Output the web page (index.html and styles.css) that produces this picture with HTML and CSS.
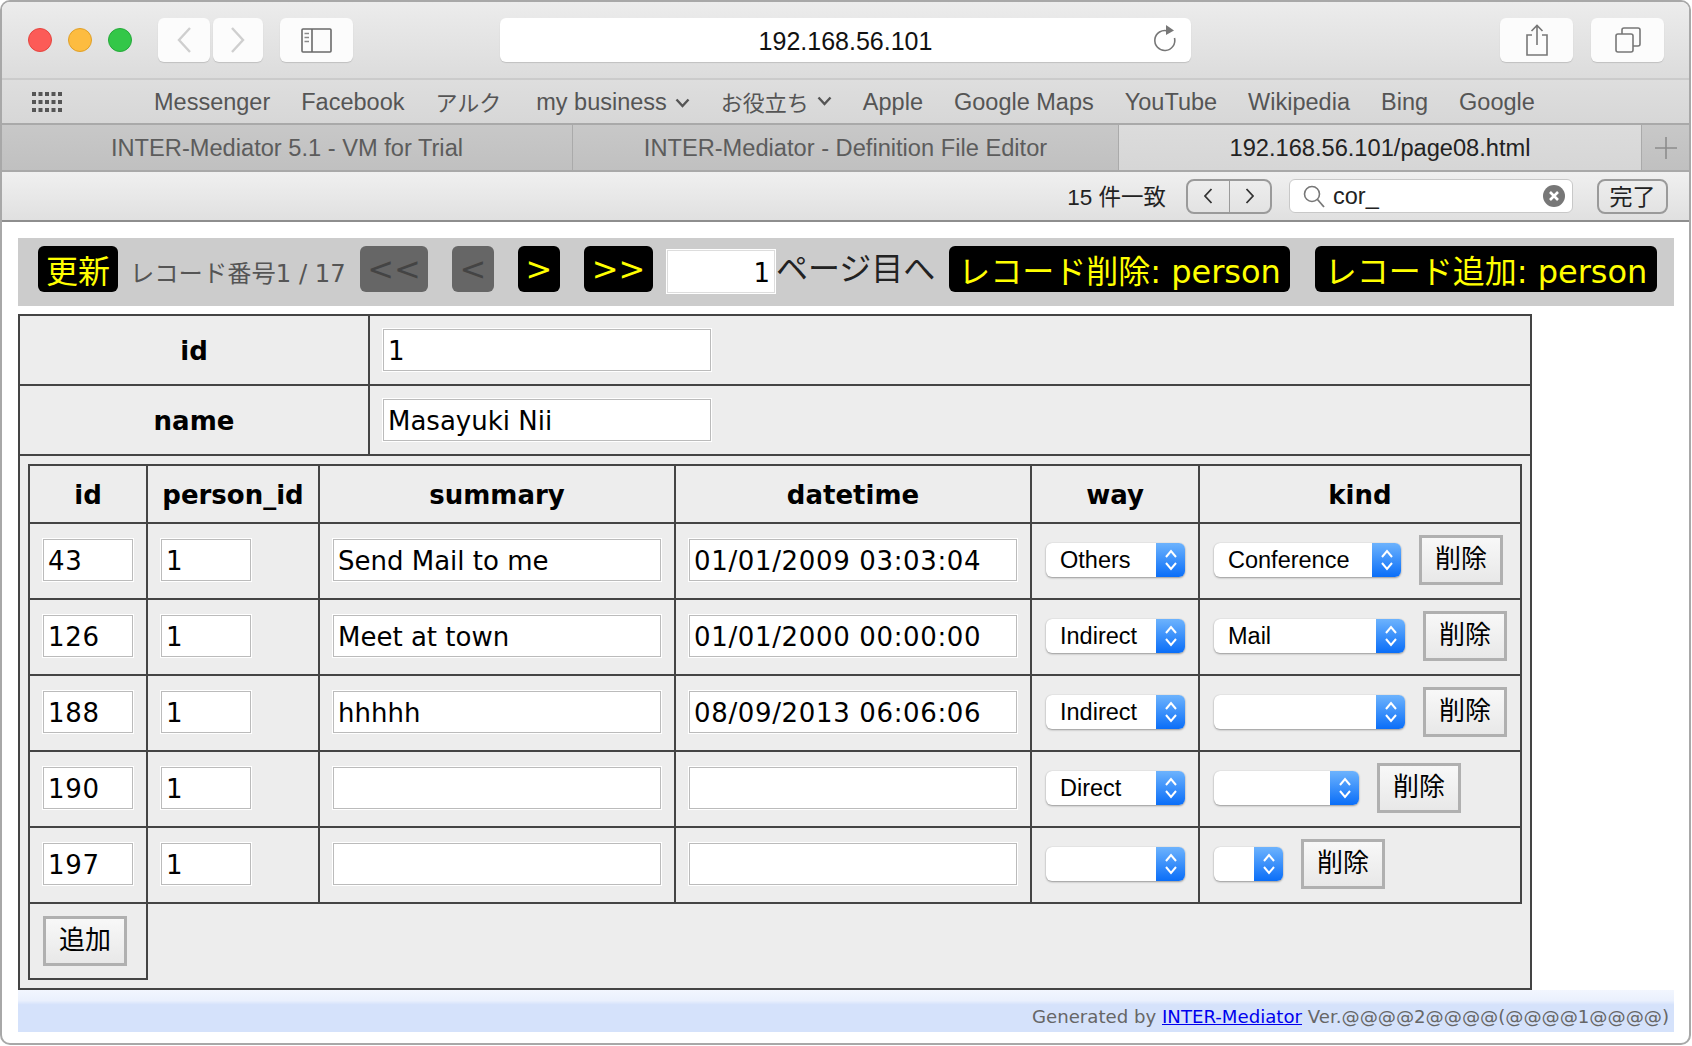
FILE: index.html
```html
<!DOCTYPE html>
<html lang="ja">
<head>
    <meta charset="UTF-8">
    <title>192.168.56.101/page08.html</title>
    <link rel="stylesheet" href="styles.css">
</head>
<body>
<div class="window">
    <div class="toolbar">
        <div class="lights">
            <span class="light red"></span>
            <span class="light yellow"></span>
            <span class="light green"></span>
        </div>
        <div class="tool-btn nav-back">
            <svg width="16" height="26" viewBox="0 0 16 26"><path d="M14 1 L3 13 L14 25" fill="none" stroke="#cfcfcf" stroke-width="2.4"/></svg>
        </div>
        <div class="tool-btn nav-forward">
            <svg width="16" height="26" viewBox="0 0 16 26"><path d="M2 1 L13 13 L2 25" fill="none" stroke="#cfcfcf" stroke-width="2.4"/></svg>
        </div>
        <div class="tool-btn sidebar-btn">
            <svg width="31" height="25" viewBox="0 0 31 25"><rect x="1" y="1" width="29" height="23" rx="1" fill="none" stroke="#6a6a6a" stroke-width="1.6"/><path d="M11 1 V24" stroke="#6a6a6a" stroke-width="1.6"/><path d="M3.5 5.5 H8 M3.5 9.5 H8 M3.5 13.5 H8" stroke="#8a8a8a" stroke-width="1.6"/></svg>
        </div>
        <div class="url-bar">
            <span class="url-text">192.168.56.101</span>
            <svg class="reload" width="24" height="30" viewBox="0 0 24 30"><path d="M15 7 A10 10 0 1 0 21.5 14" fill="none" stroke="#777" stroke-width="1.6"/><path d="M13 1 L21 6.5 L13 11 Z" fill="#777"/></svg>
        </div>
        <div class="tool-btn share-btn">
            <svg width="24" height="32" viewBox="0 0 24 32"><path d="M7 11 H2 V31 H22 V11 H17" fill="none" stroke="#777" stroke-width="1.6"/><path d="M12 2 V21 M6.5 7 L12 1.5 L17.5 7" fill="none" stroke="#777" stroke-width="1.6"/></svg>
        </div>
        <div class="tool-btn tabs-btn">
            <svg width="26" height="26" viewBox="0 0 26 26"><rect x="1" y="7" width="17" height="18" rx="2" fill="none" stroke="#777" stroke-width="1.6"/><path d="M7 7 V3 Q7 1 9 1 H23 Q25 1 25 3 V17 Q25 19 23 19 H18" fill="none" stroke="#777" stroke-width="1.6"/></svg>
        </div>
    </div>

    <div class="bookmarks">
        <svg class="grid-icon" width="30" height="20" viewBox="0 0 30 20" fill="#555">
            <path d="M0 0h4v4H0z M6.500 0h4v4h-4z M13 0h4v4h-4z M19.500 0h4v4h-4z M26 0h4v4h-4z M0 8h4v4H0z M6.500 8h4v4h-4z M13 8h4v4h-4z M19.500 8h4v4h-4z M26 8h4v4h-4z M0 16h4v4H0z M6.500 16h4v4h-4z M13 16h4v4h-4z M19.500 16h4v4h-4z M26 16h4v4h-4z"/>
        </svg>
        <a class="bookmark">Messenger</a>
        <a class="bookmark">Facebook</a>
        <a class="bookmark bookmark-ja bookmark-gap">アルク</a>
        <a class="bookmark">my business
            <svg width="15" height="10" viewBox="0 0 15 10"><path d="M1.500 1.500 L7.500 8 L13.500 1.500" fill="none" stroke="#555" stroke-width="2.400"/></svg>
        </a>
        <a class="bookmark bookmark-ja">お役立ち
            <svg width="15" height="10" viewBox="0 0 15 10"><path d="M1.500 1.500 L7.500 8 L13.500 1.500" fill="none" stroke="#555" stroke-width="2.400"/></svg>
        </a>
        <a class="bookmark">Apple</a>
        <a class="bookmark">Google Maps</a>
        <a class="bookmark">YouTube</a>
        <a class="bookmark">Wikipedia</a>
        <a class="bookmark">Bing</a>
        <a class="bookmark">Google</a>
    </div>

    <div class="tabs">
        <div class="tab tab-one">INTER-Mediator 5.1 - VM for Trial</div>
        <div class="tab tab-two">INTER-Mediator - Definition File Editor</div>
        <div class="tab tab-active">192.168.56.101/page08.html</div>
        <div class="tab tab-new">
            <svg width="24" height="24" viewBox="0 0 24 24"><path d="M12 1 V23 M1 12 H23" stroke="#8c8c8c" stroke-width="1.600"/></svg>
        </div>
    </div>

    <div class="findbar">
        <span class="find-count">15 件一致</span>
        <div class="find-arrows">
            <span class="find-arrow">
                <svg width="10" height="16" viewBox="0 0 10 16"><path d="M8.500 1 L2 8 L8.500 15" fill="none" stroke="#333" stroke-width="1.800"/></svg>
            </span>
            <span class="find-arrow">
                <svg width="10" height="16" viewBox="0 0 10 16"><path d="M1.500 1 L8 8 L1.500 15" fill="none" stroke="#333" stroke-width="1.800"/></svg>
            </span>
        </div>
        <div class="find-field">
            <svg width="24" height="24" viewBox="0 0 24 24"><circle cx="10" cy="10" r="7.500" fill="none" stroke="#777" stroke-width="1.600"/><path d="M15.500 15.500 L22 23" stroke="#777" stroke-width="1.800"/></svg>
            <span class="find-query">cor_</span>
            <svg class="find-clear" width="22" height="22" viewBox="0 0 22 22"><circle cx="11" cy="11" r="11" fill="#777"/><path d="M7 7 L15 15 M15 7 L7 15" stroke="#fff" stroke-width="2.600"/></svg>
        </div>
        <div class="find-done">完了</div>
    </div>

    <div class="page">
        <div class="navigator">
            <span class="nav-button btn-refresh">更新</span>
            <span class="record-count">レコード番号1 / 17</span>
            <span class="nav-button btn-first disabled">&lt;&lt;</span>
            <span class="nav-button btn-prev disabled">&lt;</span>
            <span class="nav-button btn-next">&gt;</span>
            <span class="nav-button btn-last">&gt;&gt;</span>
            <input class="page-input" type="text" value="1">
            <span class="page-label">ページ目へ</span>
            <span class="nav-button btn-delete">レコード削除: person</span>
            <span class="nav-button btn-add">レコード追加: person</span>
        </div>

        <table class="master">
            <tr>
                <th class="master-label">id</th>
                <td class="master-value"><input class="field field-master" type="text" value="1"></td>
            </tr>
            <tr>
                <th class="master-label">name</th>
                <td class="master-value"><input class="field field-master" type="text" value="Masayuki Nii"></td>
            </tr>
            <tr>
                <td class="detail-wrap" colspan="2">
                    <table class="detail">
                        <colgroup>
                            <col class="col-id"><col class="col-person"><col class="col-summary"><col class="col-datetime"><col class="col-way"><col class="col-kind">
                        </colgroup>
                        <thead>
                            <tr><th>id</th><th>person_id</th><th>summary</th><th>datetime</th><th>way</th><th>kind</th></tr>
                        </thead>
                        <tbody>
                            <tr>
                                <td><input class="field field-short field-num" type="text" value="43"></td>
                                <td><input class="field field-short" type="text" value="1"></td>
                                <td><input class="field field-long" type="text" value="Send Mail to me"></td>
                                <td><input class="field field-long field-num" type="text" value="01/01/2009 03:03:04"></td>
                                <td><div class="select select-way"><span class="select-label">Others</span><span class="select-arrows"><svg width="14" height="24" viewBox="0 0 14 24"><path d="M2 9 L7 3 L12 9 M2 15 L7 21 L12 15" fill="none" stroke="#fff" stroke-width="2"/></svg></span></div></td>
                                <td><div class="kind-cell"><div class="select select-conference"><span class="select-label">Conference</span><span class="select-arrows"><svg width="14" height="24" viewBox="0 0 14 24"><path d="M2 9 L7 3 L12 9 M2 15 L7 21 L12 15" fill="none" stroke="#fff" stroke-width="2"/></svg></span></div><button class="row-button" type="button">削除</button></div></td>
                            </tr>
                            <tr>
                                <td><input class="field field-short field-num" type="text" value="126"></td>
                                <td><input class="field field-short" type="text" value="1"></td>
                                <td><input class="field field-long" type="text" value="Meet at town"></td>
                                <td><input class="field field-long field-num" type="text" value="01/01/2000 00:00:00"></td>
                                <td><div class="select select-way"><span class="select-label">Indirect</span><span class="select-arrows"><svg width="14" height="24" viewBox="0 0 14 24"><path d="M2 9 L7 3 L12 9 M2 15 L7 21 L12 15" fill="none" stroke="#fff" stroke-width="2"/></svg></span></div></td>
                                <td><div class="kind-cell"><div class="select select-mail"><span class="select-label">Mail</span><span class="select-arrows"><svg width="14" height="24" viewBox="0 0 14 24"><path d="M2 9 L7 3 L12 9 M2 15 L7 21 L12 15" fill="none" stroke="#fff" stroke-width="2"/></svg></span></div><button class="row-button" type="button">削除</button></div></td>
                            </tr>
                            <tr>
                                <td><input class="field field-short field-num" type="text" value="188"></td>
                                <td><input class="field field-short" type="text" value="1"></td>
                                <td><input class="field field-long" type="text" value="hhhhh"></td>
                                <td><input class="field field-long field-num" type="text" value="08/09/2013 06:06:06"></td>
                                <td><div class="select select-way"><span class="select-label">Indirect</span><span class="select-arrows"><svg width="14" height="24" viewBox="0 0 14 24"><path d="M2 9 L7 3 L12 9 M2 15 L7 21 L12 15" fill="none" stroke="#fff" stroke-width="2"/></svg></span></div></td>
                                <td><div class="kind-cell"><div class="select select-mail"><span class="select-label"></span><span class="select-arrows"><svg width="14" height="24" viewBox="0 0 14 24"><path d="M2 9 L7 3 L12 9 M2 15 L7 21 L12 15" fill="none" stroke="#fff" stroke-width="2"/></svg></span></div><button class="row-button" type="button">削除</button></div></td>
                            </tr>
                            <tr>
                                <td><input class="field field-short field-num" type="text" value="190"></td>
                                <td><input class="field field-short" type="text" value="1"></td>
                                <td><input class="field field-long" type="text" value=""></td>
                                <td><input class="field field-long" type="text" value=""></td>
                                <td><div class="select select-way"><span class="select-label">Direct</span><span class="select-arrows"><svg width="14" height="24" viewBox="0 0 14 24"><path d="M2 9 L7 3 L12 9 M2 15 L7 21 L12 15" fill="none" stroke="#fff" stroke-width="2"/></svg></span></div></td>
                                <td><div class="kind-cell"><div class="select select-medium"><span class="select-label"></span><span class="select-arrows"><svg width="14" height="24" viewBox="0 0 14 24"><path d="M2 9 L7 3 L12 9 M2 15 L7 21 L12 15" fill="none" stroke="#fff" stroke-width="2"/></svg></span></div><button class="row-button" type="button">削除</button></div></td>
                            </tr>
                            <tr>
                                <td><input class="field field-short field-num" type="text" value="197"></td>
                                <td><input class="field field-short" type="text" value="1"></td>
                                <td><input class="field field-long" type="text" value=""></td>
                                <td><input class="field field-long" type="text" value=""></td>
                                <td><div class="select select-way"><span class="select-label"></span><span class="select-arrows"><svg width="14" height="24" viewBox="0 0 14 24"><path d="M2 9 L7 3 L12 9 M2 15 L7 21 L12 15" fill="none" stroke="#fff" stroke-width="2"/></svg></span></div></td>
                                <td><div class="kind-cell"><div class="select select-tiny"><span class="select-label"></span><span class="select-arrows"><svg width="14" height="24" viewBox="0 0 14 24"><path d="M2 9 L7 3 L12 9 M2 15 L7 21 L12 15" fill="none" stroke="#fff" stroke-width="2"/></svg></span></div><button class="row-button" type="button">削除</button></div></td>
                            </tr>
                        </tbody>
                        <tfoot>
                            <tr>
                                <td class="add-cell"><button class="row-button" type="button">追加</button></td>
                                <td class="no-border" colspan="5"></td>
                            </tr>
                        </tfoot>
                    </table>
                </td>
            </tr>
        </table>

        <div class="footer">
            Generated by <a class="footer-link" href="#">INTER-Mediator</a> Ver.@@@@2@@@@(@@@@1@@@@)
        </div>
    </div>
</div>
</body>
</html>
```

FILE: styles.css
```css
* {
    box-sizing: border-box;
}
html, body {
    margin: 0;
    padding: 0;
    background: #fff;
}
.window {
    width: 1691px;
    height: 1045px;
    border: 2px solid #a8a8a8;
    border-radius: 10px;
    overflow: hidden;
    font-family: "Liberation Sans", "Noto Sans CJK JP", sans-serif;
    background: #fff;
}

/* browser chrome */
.toolbar {
    display: flex;
    align-items: center;
    height: 78px;
    background: linear-gradient(#ececec, #dcdcdc);
    border-bottom: 2px solid #cbcbcb;
}
.lights {
    display: flex;
    gap: 16px;
    margin-left: 26px;
    margin-right: 26px;
}
.light {
    width: 24px;
    height: 24px;
    border-radius: 50%;
}
.red { background: #fc5b57; border: 1px solid #e5453f; }
.yellow { background: #fdbc40; border: 1px solid #e0a028; }
.green { background: #33c748; border: 1px solid #25a93a; }
.tool-btn {
    display: flex;
    align-items: center;
    justify-content: center;
    height: 44px;
    background: #fcfcfc;
    border-radius: 6px;
    box-shadow: 0 1px 1px #c0c0c0;
}
.nav-back { width: 52px; }
.nav-forward { width: 50px; margin-left: 3px; }
.sidebar-btn { width: 73px; margin-left: 17px; }
.url-bar {
    position: relative;
    display: flex;
    align-items: center;
    justify-content: center;
    width: 691px;
    height: 44px;
    margin-left: 147px;
    background: #fff;
    border-radius: 6px;
    box-shadow: 0 1px 1px #c0c0c0;
}
.url-text {
    padding-top: 2px;
    font-size: 25px;
    color: #111;
}
.reload {
    position: absolute;
    right: 14px;
    top: 6px;
}
.share-btn { width: 73px; margin-left: 309px; }
.tabs-btn { width: 73px; margin-left: 18px; }

.bookmarks {
    display: flex;
    align-items: center;
    gap: 31px;
    height: 45px;
    padding-top: 2px;
    background: linear-gradient(#dedede, #d7d7d7);
    border-bottom: 2px solid #a9a9a9;
    font-size: 23.500px;
    color: #555;
}
.grid-icon {
    margin-left: 30px;
    margin-right: 61px;
    margin-bottom: 2px;
}
.bookmark {
    display: flex;
    align-items: center;
    gap: 8px;
    white-space: nowrap;
}
.bookmark-ja {
    padding-bottom: 4px;
    font-size: 22px;
}
.bookmark-gap {
    margin-right: 4px;
}

.tabs {
    display: flex;
    height: 47px;
    border-bottom: 2px solid #a9a9a9;
    font-size: 23.650px;
    color: #5c5c5c;
}
.tab {
    display: flex;
    align-items: center;
    justify-content: center;
    padding-top: 2px;
    background: linear-gradient(#c8c8c8, #c0c0c0);
    white-space: nowrap;
}
.tab-one { width: 571px; border-right: 1px solid #aaa; }
.tab-two { width: 546px; border-right: 1px solid #aaa; }
.tab-active {
    width: 523px;
    background: linear-gradient(#dcdcdc, #d6d6d6);
    border-right: 1px solid #aaa;
    color: #222;
}
.tab-new { flex: 1; padding-top: 0; }

.findbar {
    display: flex;
    align-items: center;
    justify-content: flex-end;
    height: 50px;
    padding-right: 21px;
    background: linear-gradient(#f0f0f0, #e0e0e0);
    border-bottom: 2px solid #8e8e8e;
}
.find-count {
    padding-bottom: 2px;
    font-size: 22.500px;
    color: #222;
    margin-right: 20px;
}
.find-arrows {
    display: flex;
    width: 86px;
    height: 35px;
    border: 2px solid #9a9a9a;
    border-radius: 8px;
    margin-right: 17px;
}
.find-arrow {
    flex: 1;
    display: flex;
    align-items: center;
    justify-content: center;
}
.find-arrow:first-child {
    border-right: 1px solid #9a9a9a;
}
.find-field {
    display: flex;
    align-items: center;
    width: 284px;
    height: 34px;
    padding: 0 7px 0 12px;
    background: #fff;
    border: 1px solid #c8c8c8;
    border-radius: 6px;
    margin-right: 24px;
}
.find-query {
    flex: 1;
    margin-left: 7px;
    font-size: 23.500px;
    color: #222;
}
.find-done {
    display: flex;
    align-items: center;
    justify-content: center;
    width: 71px;
    height: 35px;
    padding-bottom: 3px;
    border: 2px solid #9a9a9a;
    border-radius: 8px;
    font-size: 23px;
    color: #222;
}

/* page content */
.page {
    padding: 16px 15px 0 16px;
    font-family: "DejaVu Sans", "Noto Sans CJK JP", sans-serif;
}
.navigator {
    display: flex;
    align-items: flex-start;
    height: 68px;
    padding: 8px 0 0 20px;
    background: #ccc;
    margin-bottom: 8px;
}
.nav-button {
    display: flex;
    align-items: center;
    justify-content: center;
    height: 46px;
    background: #000;
    color: #ff0;
    border-radius: 6px;
    font-size: 32px;
    white-space: nowrap;
}
.nav-button.disabled {
    background: #666;
    color: #444;
}
.btn-refresh { width: 80px; }
.record-count {
    width: 214px;
    margin: 0 16px 0 12px;
    height: 46px;
    line-height: 55px;
    font-size: 24.300px;
    color: #555;
    white-space: nowrap;
}
.btn-first { width: 68px; margin-right: 24px; }
.btn-prev { width: 42px; margin-right: 24px; }
.btn-next { width: 42px; margin-right: 24px; }
.btn-last { width: 69px; margin-right: 14px; }
.page-input {
    width: 108px;
    height: 43px;
    margin-top: 4px;
    padding: 3px 4px 0 0;
    border: 1px solid #ddd;
    outline: 1px solid #fff;
    background: #fff;
    text-align: right;
    font: 26px "DejaVu Sans", sans-serif;
    color: #000;
}
.page-label {
    width: 158px;
    margin-left: 1px;
    margin-right: 15px;
    font-size: 32px;
    line-height: 47px;
    color: #222;
    white-space: nowrap;
}
.btn-delete { width: 341px; margin-right: 25px; }
.btn-add { width: 342px; }

.master {
    width: 1514px;
    border-collapse: collapse;
    table-layout: fixed;
    background: #ededed;
    border: 2px solid #444;
}
.master th, .master td {
    border: 2px solid #444;
}
.master-label {
    width: 350px;
    height: 70px;
    padding-top: 3px;
    font-size: 26px;
    color: #000;
}
.master-value {
    height: 70px;
    padding-left: 13px;
}
.detail-wrap {
    padding: 8px;
}
.detail {
    width: 1492px;
    border-collapse: collapse;
    table-layout: fixed;
}
.col-id { width: 118px; }
.col-person { width: 172px; }
.col-summary { width: 356px; }
.col-datetime { width: 356px; }
.col-way { width: 168px; }
.col-kind { width: 322px; }
.detail th {
    height: 58px;
    padding-top: 3px;
    font-size: 26px;
    color: #000;
}
.detail tbody td {
    height: 76px;
    padding: 0 0 2px 13px;
}
.detail .add-cell {
    height: 76px;
    padding: 0 0 0 13px;
}
.master .no-border {
    border: 0;
    border-top: 2px solid #444;
    border-left: 2px solid #444;
}
.field {
    display: block;
    height: 42px;
    padding: 2px 4px 0;
    border: 1px solid #bbb;
    outline: 1px solid #fff;
    background: #fff;
    font: 26px "DejaVu Sans", sans-serif;
    color: #000;
}
.field-master { width: 328px; }
.field-short { width: 90px; }
.field-long { width: 328px; }
.field-num { letter-spacing: 0.650px; }

.kind-cell {
    display: flex;
    align-items: center;
    gap: 18px;
    margin-left: 1px;
}
.select {
    display: flex;
    height: 34px;
    flex: none;
    background: #fff;
    border-radius: 6px;
    box-shadow: 0 1px 2px #999, 0 0 1px #bbb;
    overflow: hidden;
    font-family: "Liberation Sans", sans-serif;
    font-size: 23.500px;
    color: #000;
}
.select-label {
    flex: 1;
    padding-left: 14px;
    line-height: 34px;
    white-space: nowrap;
}
.select-arrows {
    display: flex;
    align-items: center;
    justify-content: center;
    width: 29px;
    background: linear-gradient(#6db3fd, #0a6ef8);
}
.select-way { width: 139px; margin-left: 1px; }
.select-conference { width: 187px; }
.select-mail { width: 191px; }
.select-medium { width: 145px; }
.select-tiny { width: 69px; }
.row-button {
    display: block;
    flex: none;
    width: 84px;
    height: 50px;
    padding: 0 0 8px;
    border: 3px solid #b0b0b0;
    background: linear-gradient(#f8f8f8, #e8e8e8);
    font: 26px "Noto Sans CJK JP", sans-serif;
    color: #000;
}

.footer {
    height: 42px;
    margin-top: 0;
    padding: 16px 5px 0 0;
    text-align: right;
    background: linear-gradient(#f2f6fe, #eaf0fd 25%, #d5e2fb 35%, #d5e2fb);
    font-size: 18.150px;
    color: #666;
    white-space: nowrap;
}
.footer-link {
    color: #00e;
    text-decoration: underline;
}
```
